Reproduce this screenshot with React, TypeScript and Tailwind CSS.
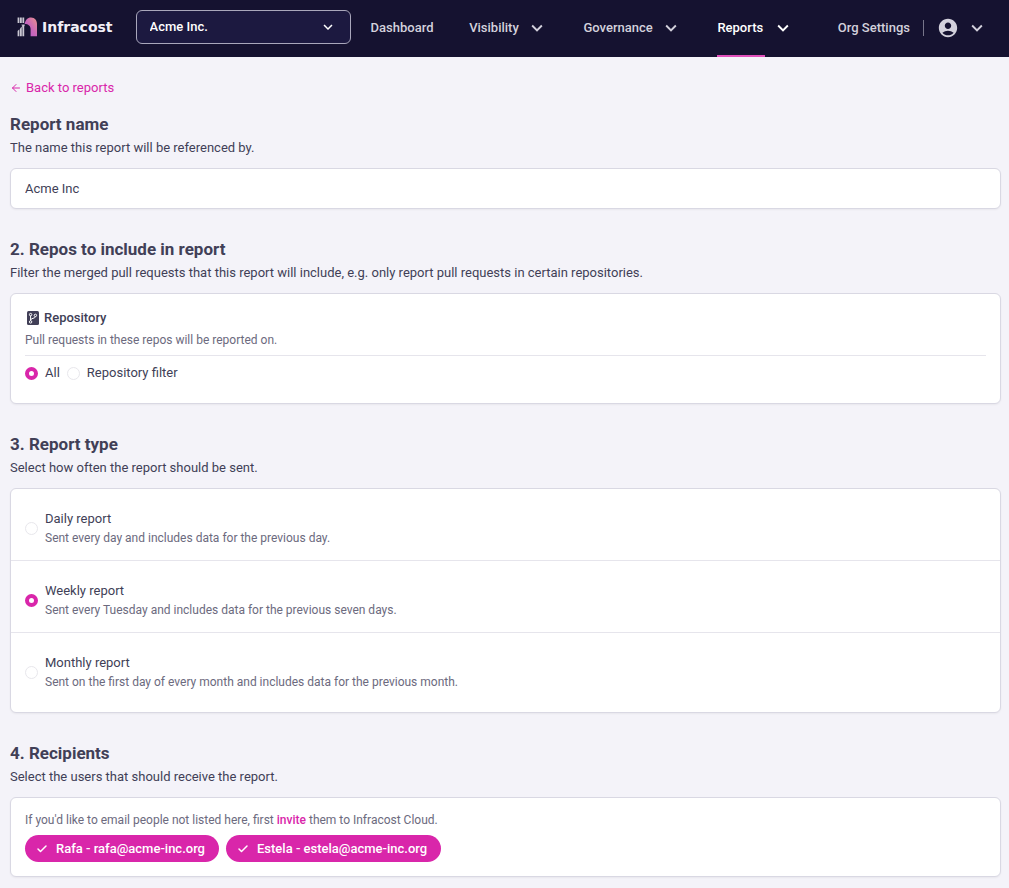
import { useState, type ReactNode } from 'react';
import { MdAccountCircle, MdKeyboardArrowDown } from 'react-icons/md';
import { LuArrowLeft, LuCheck } from 'react-icons/lu';

function Logo() {
  return (
    <a href="#home" className="flex items-center gap-1 text-[#f1eff7]">
      <svg width="22" height="20" viewBox="0 0 22 20" aria-hidden="true">
        <defs>
          <linearGradient id="arch" x1="0" y1="1" x2="1" y2="0">
            <stop offset="0" stopColor="#b35bd0" />
            <stop offset="0.5" stopColor="#c968b8" />
            <stop offset="1" stopColor="#e9908c" />
          </linearGradient>
        </defs>
        <path d="M5.4 7.5H8.6v1.2L6.8 11z" fill="#a9a7b8" />
        <g fill="#c9c7d2">
          <rect x="1.6" y="0.5" width="1.8" height="5.5" />
          <rect x="4" y="0.5" width="1.8" height="5.5" />
          <rect x="6.4" y="0.5" width="1.8" height="5.5" />
          <path d="M1.6 19.3V14l1.8-1.8v7.1z" />
          <path d="M4 19.3V11.4l1.8-2v9.9z" />
          <path d="M6.4 19.3V8.6L8.2 7.5v11.8z" />
        </g>
        <path
          d="M8.6 7C9.2 3.2 11.6.5 15 .5c4 0 6 3 6 7v11.8h-6.4V12c0-3-2.2-5-6-5z"
          fill="url(#arch)"
        />
      </svg>
      <span className="font-['DejaVu_Sans',sans-serif] text-[14px] leading-5 font-bold">Infracost</span>
    </a>
  );
}

function NavMenu({ label, active = false }: { label: string; active?: boolean }) {
  return (
    <button
      type="button"
      className={
        active
          ? 'flex h-full items-center gap-[7px] font-medium text-white'
          : 'flex h-full items-center gap-[7px] font-medium text-[#d3d1dc]'
      }
    >
      <span
        className={
          active
            ? 'flex h-full items-center border-b-2 border-[#e04fbb] pr-0.5'
            : 'flex h-full items-center border-b-2 border-transparent'
        }
      >
        {label}
      </span>
      <span className="border-b-2 border-transparent">
        <MdKeyboardArrowDown size={22} />
      </span>
    </button>
  );
}

function Header() {
  return (
    <header className="flex h-[57px] bg-[#151230] pr-[21px] pl-4 text-[13px]">
      <div className="flex items-center gap-[23px] pb-[3px]">
        <Logo />
        <div className="relative">
          <select
            aria-label="Organization"
            className="block h-[34px] w-[215px] appearance-none rounded-md border border-[#a9a7bb] bg-[#1c1940] px-[13px] font-medium text-white"
          >
            <option>Acme Inc.</option>
          </select>
          <MdKeyboardArrowDown
            size={18}
            className="pointer-events-none absolute top-2 right-3.5 text-white"
          />
        </div>
      </div>
      <nav className="ml-5 flex grow items-center justify-between whitespace-nowrap text-[#d3d1dc]">
        <a href="#dashboard" className="flex h-full items-center border-b-2 border-transparent font-medium">
          Dashboard
        </a>
        <NavMenu label="Visibility" />
        <NavMenu label="Governance" />
        <NavMenu label="Reports" active />
        <div className="ml-2 flex h-full items-center border-b-2 border-transparent">
          <a href="#settings" className="font-medium">
            Org Settings
          </a>
          <span className="mx-[13px] h-4 w-px bg-[#77758a]" />
          <button type="button" aria-label="Account" className="flex items-center gap-[7px]">
            <MdAccountCircle size={22} />
            <MdKeyboardArrowDown size={22} />
          </button>
        </div>
      </nav>
    </header>
  );
}

function Section({ title, description, children }: { title: string; description: string; children: ReactNode }) {
  return (
    <section>
      <h2 className="text-[17px] leading-6 font-bold">{title}</h2>
      <p className="mt-0.5 mb-2.5 text-[13px] leading-5">{description}</p>
      {children}
    </section>
  );
}

const card = 'rounded-md border border-[#d9d8e3] bg-white shadow-xs';
const radio =
  'size-[13px] shrink-0 appearance-none rounded-full border border-[#e8e7ec] bg-white checked:border-4 checked:border-[#d926aa]';

const reportTypes = [
  { id: 'daily', name: 'Daily report', note: 'Sent every day and includes data for the previous day.' },
  { id: 'weekly', name: 'Weekly report', note: 'Sent every Tuesday and includes data for the previous seven days.' },
  {
    id: 'monthly',
    name: 'Monthly report',
    note: 'Sent on the first day of every month and includes data for the previous month.',
  },
];

const users = [
  { name: 'Rafa', email: 'rafa@acme-inc.org' },
  { name: 'Estela', email: 'estela@acme-inc.org' },
];

function RepoIcon() {
  return (
    <svg width="12" height="14" viewBox="0 0 12 14" aria-hidden="true">
      <rect width="12" height="14" rx="1.5" fill="#413f57" />
      <g fill="none" stroke="#fff" strokeWidth="1">
        <circle cx="3.6" cy="3.6" r="1.2" />
        <circle cx="3.6" cy="10.9" r="1.2" />
        <circle cx="8.4" cy="4.4" r="1.2" />
        <path d="M3.6 4.8v4.9M8.4 5.6c0 2.2-4.8 1.2-4.8 3.6" />
      </g>
    </svg>
  );
}

export default function App() {
  const [name, setName] = useState('Acme Inc');
  const [scope, setScope] = useState('all');
  const [type, setType] = useState('weekly');
  const [selected, setSelected] = useState(users.map((u) => u.email));

  const toggle = (email: string) =>
    setSelected((s) => (s.includes(email) ? s.filter((e) => e !== email) : [...s, email]));

  return (
    <div className="min-h-screen bg-[#f4f3f9] font-['Roboto',sans-serif] text-[#413f57]">
      <Header />
      <main className="pt-[21px] pr-2 pb-[11px] pl-2.5">
        <a href="#reports" className="flex w-fit items-center gap-1 text-[13px] leading-5 text-[#d926aa]">
          <LuArrowLeft size={12} />
          Back to reports
        </a>
        <form className="mt-3.5 flex flex-col gap-7">
          <Section title="Report name" description="The name this report will be referenced by.">
            <input
              type="text"
              aria-label="Report name"
              value={name}
              onChange={(e) => setName(e.target.value)}
              className={`${card} block h-[41px] w-full px-3.5 text-[13px]`}
            />
          </Section>

          <Section
            title="2. Repos to include in report"
            description="Filter the merged pull requests that this report will include, e.g. only report pull requests in certain repositories."
          >
            <div className={`${card} px-3.5 pt-3.5 pb-5`}>
              <h3 className="flex items-center gap-[5px] pl-0.5 text-[13px] leading-5 font-medium">
                <RepoIcon />
                Repository
              </h3>
              <p className="mt-[3px] border-b border-[#e6e5ec] pb-1.5 text-[12px] leading-[18px] text-[#6c6a7e]">
                Pull requests in these repos will be reported on.
              </p>
              <div className="mt-[7px] flex items-center gap-[7px] text-[13px] leading-5">
                <label className="flex items-center gap-[7px]">
                  <input
                    type="radio"
                    name="scope"
                    className={radio}
                    checked={scope === 'all'}
                    onChange={() => setScope('all')}
                  />
                  All
                </label>
                <label className="flex items-center gap-[7px]">
                  <input
                    type="radio"
                    name="scope"
                    className={radio}
                    checked={scope === 'filter'}
                    onChange={() => setScope('filter')}
                  />
                  Repository filter
                </label>
              </div>
            </div>
          </Section>

          <Section title="3. Report type" description="Select how often the report should be sent.">
            <div className={`${card} divide-y divide-[#e6e5ec] pb-2`}>
              {reportTypes.map((r) => (
                <label key={r.id} className="flex items-center gap-[7px] px-3.5 pt-5 pb-3">
                  <input
                    type="radio"
                    name="type"
                    className={radio}
                    checked={type === r.id}
                    onChange={() => setType(r.id)}
                  />
                  <span>
                    <span className="block text-[13px] leading-5">{r.name}</span>
                    <span className="block text-[12px] leading-[19px] text-[#6c6a7e]">{r.note}</span>
                  </span>
                </label>
              ))}
            </div>
          </Section>

          <Section title="4. Recipients" description="Select the users that should receive the report.">
            <div className={`${card} px-3.5 pt-[13px] pb-3.5`}>
              <p className="text-[12px] leading-[18px] text-[#6c6a7e]">
                If you'd like to email people not listed here, first{' '}
                <a href="#invite" className="font-medium text-[#d926aa]">
                  invite
                </a>{' '}
                them to Infracost Cloud.
              </p>
              <div className="mt-1.5 flex flex-wrap gap-[7px]">
                {users.map((u) => (
                  <button
                    key={u.email}
                    type="button"
                    aria-pressed={selected.includes(u.email)}
                    onClick={() => toggle(u.email)}
                    className="flex h-[27px] items-center gap-2 rounded-full bg-[#d926aa] pr-3.5 pl-[11px] text-[13px] font-medium text-white"
                  >
                    <LuCheck size={12} strokeWidth={3} />
                    {u.name} - {u.email}
                  </button>
                ))}
              </div>
            </div>
          </Section>
        </form>
      </main>
    </div>
  );
}
